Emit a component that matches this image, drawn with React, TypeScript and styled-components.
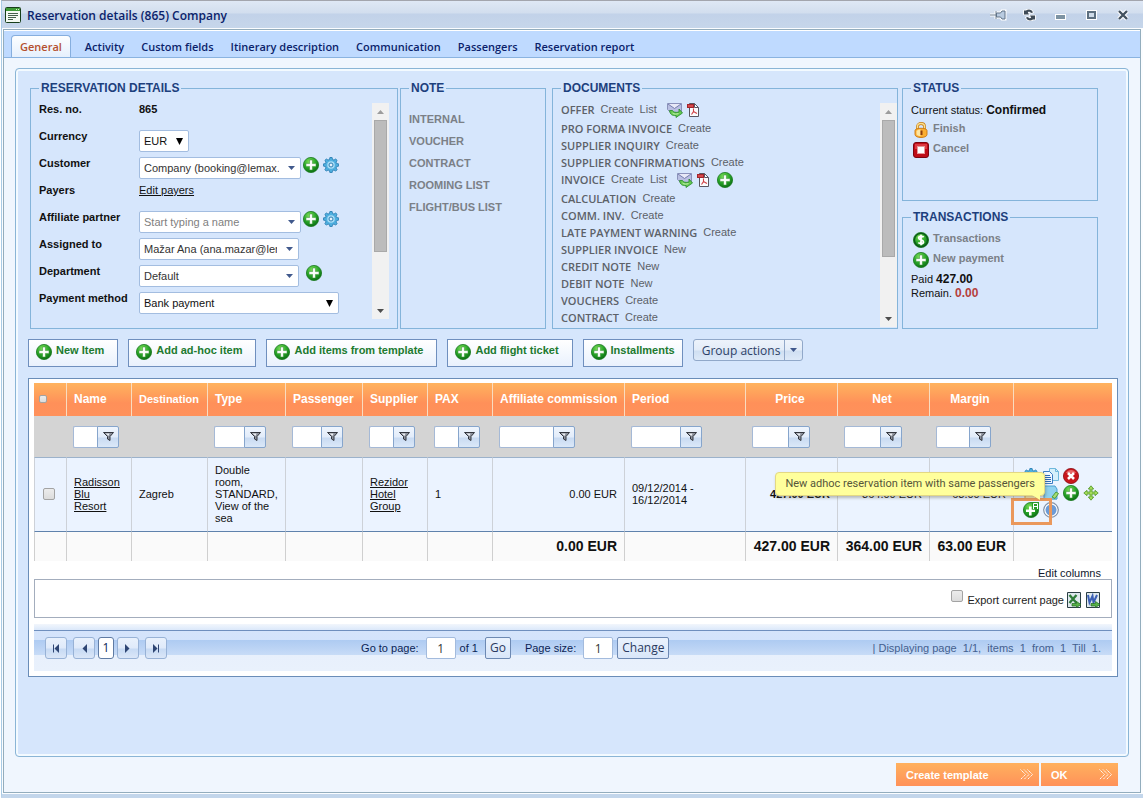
import React from "react";
import styled, { createGlobalStyle, css } from "styled-components";

const GlobalStyle = createGlobalStyle`
  *, *::before, *::after { box-sizing: border-box; }
  body {
    margin: 0;
    background: #fff;
    color: #111;
    font-family: "Liberation Sans", Arial, sans-serif;
    font-size: 11px;
    line-height: 14px;
  }
  button, input, select { font: inherit; color: inherit; margin: 0; }
  button { cursor: pointer; }
`;

const humanist = css`font-family: "Open Sans", "Noto Sans", sans-serif;`;

/* ---------- window frame ---------- */

const Frame = styled.div`
  display: flex;
  flex-direction: column;
  min-height: calc(100vh - 1px);
  margin-left: 1px;
  border-top: 1px solid #a3a5ad;
  border-left: 1px solid #a9cbe6;
  border-bottom: 4px solid #c3d6eb;
  background: #fbfdff;
`;

const TitleBar = styled.header`
  display: flex;
  align-items: center;
  gap: 6px;
  height: 27px;
  padding: 0 5px 0 3px;
  background: linear-gradient(#dfe8f5, #d2deee 12px, #c2d2e9 13px, #c6d6ea);
`;

const Title = styled.h1`
  ${humanist}
  flex: 1;
  margin: 0;
  padding-top: 2px;
  font-size: 12px;
  font-weight: 600;
  line-height: 16px;
  color: #0b1f6b;
`;

const WindowControls = styled.div`
  display: flex;
`;

const WindowButton = styled.button`
  display: flex;
  align-items: center;
  justify-content: center;
  width: 31px;
  height: 20px;
  padding: 0;
  border: 0;
  background: none;
`;

const WindowBody = styled.main`
  display: flex;
  flex: 1;
  flex-direction: column;
  margin: 1px 2px 1px 1px;
  border: 1px solid #93adbd;
  background: #f0f6fe;
`;

const TabStrip = styled.nav`
  display: flex;
  align-items: flex-end;
  gap: 1px;
  height: 28px;
  padding-left: 7px;
  border-top: 1px solid #fff;
  border-bottom: 1px solid #8ab3e0;
  background: #bfdaff;
`;

const Tab = styled.button<{ $active?: boolean }>`
  ${humanist}
  height: 22px;
  padding: 2px 8px 0;
  border: 0;
  background: none;
  font-size: 11px;
  font-weight: 600;
  color: #0b1f6b;
  ${(p) =>
    p.$active &&
    css`
      margin-right: 5px;
      padding-top: 1px;
      border: 1px solid #86aede;
      border-bottom: 0;
      border-radius: 4px 4px 0 0;
      background: linear-gradient(#fdfeff, #e6f0fd);
      color: #b5502f;
    `}
`;

const Panel = styled.section`
  flex: 1;
  margin: 10px 11px 0;
  padding: 12px 10px 12px 12px;
  border: 1px solid #8ab5d6;
  border-radius: 4px;
  background: #d6e6fc;
  box-shadow: inset 0 0 0 2px #f3faff;
`;

const Footer = styled.footer`
  display: flex;
  justify-content: flex-end;
  gap: 2px;
  padding: 6px 22px 6px;
`;

const FooterButton = styled.button<{ $wide?: boolean }>`
  display: flex;
  align-items: center;
  justify-content: space-between;
  width: ${(p) => (p.$wide ? 143 : 77)}px;
  height: 23px;
  padding: 0 6px 0 10px;
  border: 0;
  background: linear-gradient(#ffb15e, #ff9159);
  color: #fff;
  font-weight: bold;
`;

/* ---------- summary boxes ---------- */

const Summary = styled.div`
  display: grid;
  grid-template-columns: 370fr 152fr 350fr 196fr;
  margin: 0 20px 0 2px;
`;

const Box = styled.fieldset<{ $after?: number }>`
  min-width: 0;
  margin: 0 ${(p) => p.$after ?? 0}px 0 0;
  padding: 8px 8px 0;
  border: 1px solid #84b4da;
`;

const Legend = styled.legend`
  padding: 0 2px;
  font-size: 12px;
  font-weight: bold;
  line-height: 14px;
  color: #1d3f7d;
`;

const SideColumn = styled.div`
  display: grid;
  grid-template-rows: 120px 119px;
  gap: 9px;
`;

const ScrollPane = styled.div`
  display: flex;
  justify-content: space-between;
`;

const DetailsPane = styled(ScrollPane)`
  height: 216px;
`;

const DocumentsPane = styled(ScrollPane)`
  height: 224px;
  margin-right: -8px;
`;

const Track = styled.div`
  display: flex;
  flex-direction: column;
  align-items: center;
  width: 17px;
  background: #f1f1f1;
`;

const TrackArrow = styled.div`
  display: flex;
  align-items: center;
  justify-content: center;
  height: 17px;
`;

const Thumb = styled.div<{ $size: number }>`
  width: 13px;
  height: ${(p) => p.$size}px;
  margin-bottom: auto;
  border: 1px solid #a9a9a9;
  background: #bcbcbc;
`;

const Form = styled.div`
  display: grid;
  grid-auto-rows: 27px;
`;

const FormRow = styled.div`
  display: flex;
  align-items: flex-start;
`;

const labelStyle = css`
  width: 100px;
  font-weight: bold;
  line-height: 13px;
`;
const FieldLabel = styled.label`${labelStyle}`;
const FieldName = styled.span`${labelStyle}`;

const FieldValue = styled.b`
  line-height: 13px;
`;

const TextLink = styled.a`
  color: inherit;
  line-height: 12px;
`;

const Field = styled.span<{ $width: number }>`
  position: relative;
  display: flex;
  align-items: center;
  width: ${(p) => p.$width}px;
  height: 22px;
  border: 1px solid #a3bde0;
  border-radius: 2px;
  background: #fff;
`;

const Select = styled.select`
  width: 100%;
  height: 20px;
  padding: 0 18px 0 4px;
  border: 0;
  background: none;
  appearance: none;
  outline: 0;
`;

const SelectMark = styled.span`
  position: absolute;
  right: 5px;
  display: flex;
  pointer-events: none;
`;

const ComboInput = styled.input`
  flex: 1;
  min-width: 0;
  height: 18px;
  padding: 0;
  margin-left: 4px;
  border: 0;
  outline: 0;
  background: none;
  color: #333;
  &::placeholder { color: #808080; opacity: 1; }
`;

const ComboButton = styled.button`
  display: flex;
  align-items: center;
  justify-content: center;
  width: 17px;
  height: 20px;
  margin-left: 4px;
  padding: 0;
  border: 0;
  background: none;
`;

const FieldIcons = styled.span<{ $before?: number }>`
  display: flex;
  gap: 4px;
  margin-left: ${(p) => p.$before ?? 2}px;
`;

const IconButton = styled.button`
  display: block;
  width: 16px;
  height: 16px;
  padding: 0;
  border: 0;
  background: none;
  svg { display: block; }
`;

const NoteList = styled.ul`
  margin: 5px 0 0;
  padding: 0;
  list-style: none;
  font-weight: bold;
  line-height: 22px;
`;

const QuietLink = styled.a`
  color: #7b8087;
  text-decoration: none;
`;

const DocumentList = styled.ul`
  margin: -2px 0 0;
  padding: 0;
  list-style: none;
`;

const DocumentRow = styled.li<{ $tall?: boolean }>`
  display: flex;
  gap: 6px;
  height: ${(p) => (p.$tall ? 19 : 17)}px;
  line-height: 17px;
  color: #5c6168;
`;

const DocumentName = styled.span`
  ${humanist}
  font-weight: 600;
`;

const DocumentLink = styled.a`
  color: #5c6168;
  text-decoration: none;
`;

const DocumentIcons = styled.span`
  display: flex;
  gap: 2px;
  margin: 1px 0 0 4px;
`;

const InvoiceAdd = styled.span`
  margin-top: 1px;
`;

const StatusLine = styled.p`
  margin: 0;
  line-height: 14px;
  b { font-size: 12px; }
`;

const Remaining = styled.b`
  color: #b5403c;
`;

const ActionList = styled.ul<{ $before?: number }>`
  display: grid;
  grid-auto-rows: 20px;
  margin: ${(p) => p.$before ?? 0}px 0 0 2px;
  padding: 0;
  list-style: none;
  font-weight: bold;
  line-height: 12px;
  li { display: flex; gap: 4px; }
`;

/* ---------- toolbar ---------- */

const Toolbar = styled.div`
  display: flex;
  align-items: flex-start;
  gap: 10px;
  margin: 10px 0 11px;
`;

const ToolButton = styled.button<{ $tight?: boolean }>`
  display: flex;
  gap: 4px;
  height: 28px;
  padding: 4px ${(p) => (p.$tight ? 7 : 13)}px 0 7px;
  border: 1px solid #6f8fbe;
  background: linear-gradient(#fff, #e9f1fd);
  color: #217a2f;
  font-weight: bold;
  line-height: 12px;
  white-space: nowrap;
`;

const SplitButton = styled.div`
  display: flex;
  height: 22px;
  border: 1px solid #91a8c9;
  border-radius: 3px;
  background: linear-gradient(#edf3fb, #e3ecf8 10px, #cfdff2 11px, #dde9f8);
`;

const SplitMain = styled.button`
  ${humanist}
  padding: 1px 4px 0 8px;
  border: 0;
  border-right: 1px solid #91a8c9;
  background: none;
  color: #2d3f66;
  font-size: 12px;
  line-height: 19px;
`;

const SplitToggle = styled.button`
  display: flex;
  align-items: center;
  justify-content: center;
  width: 17px;
  padding: 0;
  border: 0;
  background: none;
`;

/* ---------- items grid ---------- */

const GridBox = styled.section`
  padding: 4px 5px 5px;
  border: 1px solid #6a8db8;
  background: #fff;
`;

const Table = styled.table`
  width: 100%;
  table-layout: fixed;
  border-collapse: separate;
  border-spacing: 0;
  line-height: 12px;
`;

type Align = "left" | "right" | "center";

const HeadCell = styled.th<{ $align?: Align; $small?: boolean }>`
  height: 33px;
  padding: 0 ${(p) => (p.$align === "center" ? 10 : 0)}px 2px 7px;
  border-left: 1px solid #f9dcc0;
  background: linear-gradient(#ffb35e, #ff9059 20px, #ff915b);
  color: #fff;
  font-size: ${(p) => (p.$small ? 11 : 12)}px;
  text-align: ${(p) => p.$align ?? "left"};
  white-space: nowrap;
  &:first-child { border-left: 0; padding-left: 5px; }
`;

const FilterCell = styled.td`
  height: 41px;
  padding: 0 0 0 7px;
  background: #d4d4d4;
`;

const Filter = styled.span`
  display: flex;
`;

const FilterInput = styled.input<{ $width: number }>`
  width: ${(p) => p.$width}px;
  height: 22px;
  padding: 0 3px;
  border: 1px solid #a5b9d6;
  border-right: 0;
  border-radius: 2px 0 0 2px;
  background: #fff;
`;

const FilterButton = styled.button`
  display: flex;
  align-items: center;
  justify-content: center;
  width: 22px;
  height: 22px;
  padding: 0;
  border: 1px solid #86a5cc;
  border-radius: 0 2px 2px 0;
  background: linear-gradient(#eff5fd, #e2ecfa 10px, #c9dbf2 11px, #dbe8f8);
`;

const Cell = styled.td<{ $align?: Align; $bold?: boolean }>`
  height: 75px;
  padding: 0 7px 2px;
  border-top: 1px solid #9cb2cb;
  border-left: 1px solid #cdd1d8;
  border-bottom: 1px solid #5f82ac;
  background: #ebf3ff;
  text-align: ${(p) => p.$align ?? "left"};
  font-weight: ${(p) => (p.$bold ? "bold" : "normal")};
`;

const TotalCell = styled.td`
  height: 29px;
  padding: 0 7px 1px;
  border-left: 1px solid #cfcfcf;
  background: #fafafa;
  font-size: 14px;
  font-weight: bold;
  text-align: right;
  white-space: nowrap;
`;

const CheckBox = styled.input<{ $size?: number }>`
  display: block;
  width: ${(p) => p.$size ?? 12}px;
  height: ${(p) => p.$size ?? 12}px;
  appearance: none;
  border: 1px solid #a3a3a3;
  border-radius: 2px;
  background: linear-gradient(#ececec, #dcdcdc);
`;

const RowCheck = styled.div`
  padding-left: 1px;
`;

const RowActions = styled.div`
  position: relative;
  display: grid;
  grid-template-columns: repeat(4, 20px);
  grid-auto-rows: 17px;
  width: 80px;
  margin-left: 2px;
`;

const Tooltip = styled.div`
  position: absolute;
  right: 58px;
  top: 4px;
  z-index: 2;
  height: 24px;
  padding: 0 9px;
  border: 1px solid #e3d884;
  border-radius: 4px;
  background: #ffff9c;
  box-shadow: 1px 2px 3px rgba(80, 80, 60, 0.35);
  color: #55553a;
  font-family: Roboto, "Liberation Sans", sans-serif;
  line-height: 22px;
  white-space: nowrap;
  &::after {
    content: "";
    position: absolute;
    right: 4px;
    top: 22px;
    border-top: 5px solid #ffff9c;
    border-left: 8px solid transparent;
  }
`;

const Highlight = styled.span`
  position: absolute;
  left: -12px;
  top: 30px;
  width: 41px;
  height: 27px;
  border: 3px solid #ea985c;
  pointer-events: none;
`;

const EditColumns = styled.div`
  padding: 6px 11px 0 0;
  line-height: 12px;
  text-align: right;
  a { color: #10182e; text-decoration: none; }
`;

const ExportBar = styled.div`
  display: flex;
  align-items: center;
  justify-content: flex-end;
  gap: 2px;
  height: 39px;
  padding: 3px 10px 0 0;
  border: 1px solid #a3adbd;
`;

const ExportIcons = styled.span`
  display: flex;
  gap: 3px;
`;

const ExportLabel = styled.label`
  display: flex;
  gap: 4px;
  color: #222;
  input { margin-top: -3px; }
`;

const Pager = styled.div`
  display: flex;
  align-items: center;
  height: 47px;
  margin-top: 6px;
  padding: 1px 11px 0;
  background: linear-gradient(
    #f2f6fc, #dbe8fa 6px, #6f8fbe 6px, #6f8fbe 7px, #d5e4fb 7px, #d3e3fb 16px,
    #aecbf2 16px, #b9d2f4 23px, #c8dcf7 31px, #e8f0fc 31px, #e9f1fc
  );
  color: #0c1f55;
`;

const PagerButtons = styled.div`
  display: flex;
  gap: 6px;
`;

const PageSteps = styled.div`
  display: flex;
  gap: 3px;
`;

const PagerButton = styled.button<{ $current?: boolean }>`
  display: flex;
  align-items: center;
  justify-content: center;
  width: ${(p) => (p.$current ? 16 : 22)}px;
  height: 22px;
  padding: 0;
  border: 1px solid ${(p) => (p.$current ? "#5f7ba4" : "#98b2d6")};
  border-radius: 3px;
  background: ${(p) => (p.$current ? "#fff" : "linear-gradient(#e9f1fc, #dfeafa 10px, #c7daf4 11px, #dbe7f8)")};
  ${humanist}
  font-size: 12px;
`;

const PagerForm = styled.div`
  display: flex;
  align-items: center;
  margin-left: calc(18% + 4px);
`;

const PagerInput = styled.input`
  ${humanist}
  width: 30px;
  height: 22px;
  margin: 0 4px 0 7px;
  padding: 0;
  border: 1px solid #a3bbdd;
  border-radius: 2px;
  background: #fff;
  color: #333;
  font-size: 12px;
  text-align: center;
`;

const PagerAction = styled.button<{ $before?: number; $after?: number }>`
  ${humanist}
  height: 22px;
  margin: 0 ${(p) => p.$after ?? 0}px 0 ${(p) => p.$before ?? 0}px;
  padding: 0 4px;
  border: 1px solid #6d89b3;
  border-radius: 2px;
  background: linear-gradient(#eaf2fd, #d9e6f9);
  color: #2b3a60;
  font-size: 12px;
  line-height: 20px;
`;

const PagerInfo = styled.span`
  margin-left: auto;
  color: #44608f;
  white-space: pre;
`;

/* ---------- icons ---------- */

const Icon = ({ size = 16, children }: { size?: number; children: React.ReactNode }) => (
  <svg width={size} height={size} viewBox="0 0 16 16" aria-hidden="true">
    {children}
  </svg>
);

const GreenBall = ({ id }: { id: string }) => (
  <>
    <defs>
      <radialGradient id={id} cx="40%" cy="28%" r="75%">
        <stop offset="0" stopColor="#7fe05a" />
        <stop offset="0.55" stopColor="#28a528" />
        <stop offset="1" stopColor="#0a6a12" />
      </radialGradient>
    </defs>
    <circle cx="8" cy="8" r="7.6" fill={`url(#${id})`} stroke="#1b7a20" strokeWidth="0.8" />
  </>
);

const PlusIcon = () => (
  <Icon>
    <GreenBall id="ball" />
    <path d="M6.6 3h2.8v3.6H13v2.8H9.400V13H6.600V9.400H3V6.600h3.600z" fill="#fff" stroke="#2c8a2a" strokeWidth="0.5" />
  </Icon>
);

const PlusAIcon = () => (
  <Icon>
    <GreenBall id="ballA" />
    <path d="M6 4.500h2.600v3H12v2.600H8.600v3.400H6v-3.400H3V7.500h3z" fill="#fff" />
    <path d="M9 0h7v7.500H9z" fill="#2a9a2a" />
    <path d="M10.500 7V1.500h4V7M10.500 4.500h4" stroke="#fff" fill="none" />
  </Icon>
);

const DollarIcon = () => (
  <Icon>
    <GreenBall id="ballD" />
    <circle cx="8" cy="8" r="6.6" fill="none" stroke="#0a5a18" strokeWidth="1.4" />
    <path d="M10.700 5.200C9.500 4 5.700 3.900 5.700 6c0 2.200 4.800 1.500 4.800 3.900 0 2.200-3.900 2.200-5.200.6M8 2.800v10.400" fill="none" stroke="#fff" strokeWidth="1.8" />
  </Icon>
);

const GearIcon = () => (
  <Icon>
    <path
      d="M6.900.5h2.200l.4 2 1.500.6 1.700-1.100 1.400 1.400-1.100 1.700.7 1.500 2 .3v2.200l-2 .4-.7 1.500 1.100 1.700-1.400 1.400-1.700-1.100-1.500.6-.4 2H6.900l-.4-2-1.500-.6-1.700 1.100-1.400-1.400L3 11l-.6-1.500-2-.4V6.900l2-.3L3 5.100 1.900 3.400 3.300 2 5 3.100l1.500-.6z"
      fill="#4fb0e0" stroke="#2b7fb3" strokeWidth="0.9"
    />
    <circle cx="8" cy="8" r="3.8" fill="#a9dcf5" />
    <circle cx="8" cy="8" r="2" fill="#e3f1fc" stroke="#2b7fb3" />
  </Icon>
);

const AppIcon = () => (
  <Icon>
    <rect x="0.5" y="0.5" width="15" height="15" rx="1" fill="#f4faf2" stroke="#173f1a" />
    <rect x="1" y="1" width="14" height="3" fill="#3e9b37" />
    <path d="M11 2.500h1M13 2.500h1" stroke="#d5f0c8" />
    <path d="M3 6.500h10M3 8.500h10M3 10.500h8M3 12.500h5" stroke="#44604a" />
  </Icon>
);

const MailIcon = () => (
  <Icon>
    <path d="M.5 1.500h14v9H3.500l-3-3z" fill="#b9bfe2" stroke="#8b92bb" />
    <path d="M1 2l6.500 4.500L14 2" fill="#e7e9f7" stroke="#767db0" />
    <path d="M2.500 8.500c.5 4 3 5.500 6.500 5v2l6.500-4.500L12 7v3c-3 .8-6 .3-6.500-1.500z" fill="#67c950" stroke="#238a28" strokeWidth="0.8" />
    <path d="M5.500 11c1.500 1.500 4 1.200 6 .6" fill="none" stroke="#c5f2b0" />
  </Icon>
);

const PdfIcon = () => (
  <Icon>
    <path d="M4.500 1.500h5l4 4v9h-9z" fill="#fbfbfd" stroke="#5a5560" />
    <path d="M9.500 1.500v4h4" fill="none" stroke="#5a5560" />
    <rect x="2.500" y="2.500" width="6" height="3" fill="#d8484c" stroke="#a3262c" />
    <path d="M8.500 6.500v3L6.500 12.500M8.500 9.500l3.500 2" fill="none" stroke="#cf4045" strokeWidth="1.100" />
  </Icon>
);

const LockIcon = () => (
  <Icon>
    <path d="M4.500 8V4.500c0-4 7-4 7 0V8" fill="none" stroke="#c47c18" strokeWidth="2.800" />
    <path d="M4.500 8V4.500c0-4 7-4 7 0V8" fill="none" stroke="#fde08c" strokeWidth="1.400" />
    <path d="M2 8.500C2 5.500 14 5.500 14 8.500v4c0 4-12 4-12 0z" fill="#fbae32" stroke="#c9760f" strokeWidth="0.9" />
    <path d="M3.500 9c1-1.200 3-1.500 4-1.500v6.500c-2 0-4-.5-4-2z" fill="#fee5a0" />
    <path d="M7.500 8.500h2V13h-2z" fill="#8e3e0c" />
  </Icon>
);

const StopIcon = () => (
  <Icon>
    <rect x="0.500" y="0.500" width="15" height="15" rx="2.500" fill="#bf0d18" stroke="#7c0510" />
    <path d="M2 2h12v5H2z" fill="#dc3a42" />
    <rect x="4.500" y="4.500" width="7" height="7" fill="#fff" stroke="#e9989a" />
  </Icon>
);

const DeleteIcon = () => (
  <Icon>
    <circle cx="8" cy="8" r="7.600" fill="#c8161d" stroke="#8c0d12" strokeWidth="0.800" />
    <path d="M3 5c2-4 8-4 10 0z" fill="#e76a6a" />
    <path d="M5 5l6 6M11 5l-6 6" stroke="#fff" strokeWidth="2.600" />
  </Icon>
);

const CopyIcon = () => (
  <Icon>
    <path d="M6.500.5h6l3 3v9h-9z" fill="#d6f0fb" stroke="#6fb8dc" />
    <path d="M12.500.5v3h3" fill="none" stroke="#6fb8dc" />
    <path d="M.5 3.500h6l3 3v9h-9z" fill="#f1f8ff" stroke="#3c7cc4" />
    <path d="M2 7.500h5M2 9.500h6M2 11.500h6M2 13.500h6" stroke="#2d6bb8" />
  </Icon>
);

const NoteIcon = () => (
  <Icon>
    <path d="M1 1h11l2 3v10H1z" fill="#8fd1f0" stroke="#4a9fd0" />
    <path d="M9 12l4-5 2.500 1.500L12 13.500z" fill="#a6dd72" stroke="#4d9c3a" />
    <path d="M1 14.500h13" stroke="#7fb8d8" />
  </Icon>
);

const FlagIcon = () => (
  <Icon>
    <path d="M2 2h11v12H2z" fill="#fbe8b0" stroke="#d9a848" />
  </Icon>
);

const MoveIcon = () => (
  <Icon>
    <path d="M8 .8L10.700 4H9v3h3V5.300L15.200 8 12 10.700V9H9v3h1.700L8 15.200 5.300 12H7V9H4v1.700L.8 8 4 5.300V7h3V4H5.300z" fill="#a5dc5c" stroke="#4f9626" strokeWidth="0.800" />
  </Icon>
);

const InfoIcon = () => (
  <Icon>
    <circle cx="8" cy="8" r="7.300" fill="#fff" stroke="#8291a8" strokeWidth="1.200" />
    <circle cx="8" cy="8" r="5.500" fill="#6d9bd6" />
    <path d="M7 4.500h2v7H7z" fill="#466fae" />
  </Icon>
);

const FunnelIcon = () => (
  <svg width="11" height="11" viewBox="0 0 11 11" aria-hidden="true">
    <path d="M.5 1.500h10L7 5.500v4L4.500 8V5.500z" fill="#8b909b" stroke="#33363e" />
    <path d="M2.500 2.500h4L5.500 5z" fill="#eef0f4" />
  </svg>
);

const SheetIcon = ({ color, letter }: { color: string; letter: "x" | "w" }) => (
  <Icon>
    <path d="M1.500.5h13v15h-13z" fill="#dfe9ee" stroke="#2b3f46" />
    {letter === "x" ? (
      <path d="M3.500 3l7 8M10.500 3l-7 8" stroke={color} strokeWidth="2.400" />
    ) : (
      <path d="M3 3l1.500 7.500L7.500 4l1 6.500 3.500-7.500" fill="none" stroke={color} strokeWidth="2" />
    )}
    <path d="M6 11.500h4.500v-2L15 12.500l-4.500 3v-1.500H6z" fill="#58b148" stroke="#1f6b20" strokeWidth="0.700" />
  </Icon>
);

const Triangle = ({ color, up, wide = 7 }: { color: string; up?: boolean; wide?: number }) => (
  <svg width={wide} height="4" viewBox="0 0 8 4" preserveAspectRatio="none" aria-hidden="true">
    <path d={up ? "M0 4h8L4 0z" : "M0 0h8L4 4z"} fill={color} />
  </svg>
);

const SelectArrow = () => (
  <svg width="7" height="7" viewBox="0 0 7 7" aria-hidden="true">
    <path d="M0 0h7L3.500 7z" fill="#000" />
  </svg>
);

const PagerGlyph = ({ back, end }: { back?: boolean; end?: boolean }) => (
  <svg width="8" height="9" viewBox="0 0 8 9" aria-hidden="true">
    <g transform={back ? "translate(8 0) scale(-1 1)" : undefined}>
      <path d="M1 0v9l4.500-4.500z" fill="#2f4674" />
      {end && <path d="M6.500 0.500v8" stroke="#2f4674" />}
    </g>
  </svg>
);

const Chevrons = () => (
  <svg width="13" height="11" viewBox="0 0 13 11" aria-hidden="true">
    <path d="M.5 0.500l5 5-5 5M4 0.500l5 5-5 5M7.500 0.500l5 5-5 5" fill="none" stroke="#fff" strokeDasharray="1.400 0.600" />
  </svg>
);

const halo = { stroke: "#fff", strokeWidth: 3 } as const;

const PinGlyph = () => (
  <svg width="17" height="12" viewBox="0 0 17 12" aria-hidden="true">
    <path d="M0 6h6M6 2v8M6.500 4h4l1.500-2h3v8h-3L10.500 8h-4z" fill="none" {...halo} />
    <path d="M0 6h6M6 2v8" stroke="#6e8093" />
    <path d="M6.500 4h4l1.500-2h3v8h-3L10.500 8h-4z" fill="#b9cbe0" stroke="#607388" />
  </svg>
);

const RefreshGlyph = () => (
  <svg width="13" height="12" viewBox="0 0 13 12" aria-hidden="true">
    <g stroke="#fff" strokeWidth="1.600" strokeLinejoin="round" fill="#3f4b57" paintOrder="stroke">
      <path d="M1 1.500h2C6-.5 9 .8 10 3.500L8 4C7 2.500 6 2.500 4.800 3.200L6 5.500H1z" />
      <path d="M12 10.500h-2C7 12.500 4 11.200 3 8.500L5 8c1 1.500 2 1.500 3.200.8L7 6.500h5z" />
    </g>
  </svg>
);

const MinimizeGlyph = () => (
  <svg width="11" height="12" viewBox="0 0 11 12" aria-hidden="true">
    <rect x="0.500" y="5.500" width="10" height="5" fill="#7d93a3" stroke="#fff" />
  </svg>
);

const RestoreGlyph = () => (
  <svg width="11" height="10" viewBox="0 0 11 10" aria-hidden="true">
    <rect x="0.500" y="0.500" width="10" height="9" fill="#fff" stroke="#fff" />
    <rect x="2" y="2" width="7" height="6" fill="#cfdbe8" stroke="#5d6f7f" strokeWidth="2" />
  </svg>
);

const CloseGlyph = () => (
  <svg width="12" height="12" viewBox="0 0 12 12" aria-hidden="true">
    <path d="M2 2l8 8M10 2l-8 8" stroke="#fff" strokeWidth="4.500" />
    <path d="M2 2l8 8M10 2l-8 8" stroke="#44525f" strokeWidth="2.400" />
  </svg>
);

/* ---------- composed parts ---------- */

const Scrollbar = ({ thumb }: { thumb: number }) => (
  <Track aria-hidden="true">
    <TrackArrow><Triangle color="#9c9c9c" up /></TrackArrow>
    <Thumb $size={thumb} />
    <TrackArrow><Triangle color="#4d4d4d" /></TrackArrow>
  </Track>
);

type ComboProps = { id: string; width: number; value?: string; placeholder?: string };

const Combo = ({ id, width, value, placeholder }: ComboProps) => (
  <Field $width={width}>
    <ComboInput id={id} defaultValue={value} placeholder={placeholder} />
    <ComboButton aria-label="Open list"><Triangle color="#41598c" /></ComboButton>
  </Field>
);

const AddButton = ({ label }: { label: string }) => (
  <IconButton aria-label={label}><PlusIcon /></IconButton>
);

const SettingsButton = ({ label }: { label: string }) => (
  <IconButton aria-label={label}><GearIcon /></IconButton>
);

const TABS = ["General", "Activity", "Custom fields", "Itinerary description", "Communication", "Passengers", "Reservation report"];

const NOTES = ["INTERNAL", "VOUCHER", "CONTRACT", "ROOMING LIST", "FLIGHT/BUS LIST"];

const DOCUMENTS: { name: string; links: string[]; files?: boolean; add?: boolean }[] = [
  { name: "OFFER", links: ["Create", "List"], files: true },
  { name: "PRO FORMA INVOICE", links: ["Create"] },
  { name: "SUPPLIER INQUIRY", links: ["Create"] },
  { name: "SUPPLIER CONFIRMATIONS", links: ["Create"] },
  { name: "INVOICE", links: ["Create", "List"], files: true, add: true },
  { name: "CALCULATION", links: ["Create"] },
  { name: "COMM. INV.", links: ["Create"] },
  { name: "LATE PAYMENT WARNING", links: ["Create"] },
  { name: "SUPPLIER INVOICE", links: ["New"] },
  { name: "CREDIT NOTE", links: ["New"] },
  { name: "DEBIT NOTE", links: ["New"] },
  { name: "VOUCHERS", links: ["Create"] },
  { name: "CONTRACT", links: ["Create"] },
];

type Column = { width: number; title?: string; align?: Align; small?: boolean; filter?: number; total?: string };

const COLUMNS: Column[] = [
  { width: 32 },
  { width: 65, title: "Name", filter: 24 },
  { width: 76, title: "Destination", small: true },
  { width: 78, title: "Type", filter: 30 },
  { width: 77, title: "Passenger", filter: 29 },
  { width: 65, title: "Supplier", filter: 24 },
  { width: 65, title: "PAX", filter: 24 },
  { width: 132, title: "Affiliate commission", filter: 54, total: "0.00 EUR" },
  { width: 121, title: "Period", filter: 49 },
  { width: 92, title: "Price", align: "center", filter: 36, total: "427.00 EUR" },
  { width: 92, title: "Net", align: "center", filter: 36, total: "364.00 EUR" },
  { width: 84, title: "Margin", align: "center", filter: 33, total: "63.00 EUR" },
  { width: 99 },
];

const TOOLS = ["New Item", "Add ad-hoc item", "Add items from template", "Add flight ticket", "Installments"];

const Col = styled.col<{ $width: number }>`
  width: ${(p) => p.$width}px;
`;

const ReservationDetails = () => (
  <Box $after={2}>
    <Legend>RESERVATION DETAILS</Legend>
    <DetailsPane>
      <Form>
        <FormRow>
          <FieldName>Res. no.</FieldName>
          <FieldValue>865</FieldValue>
        </FormRow>
        <FormRow>
          <FieldLabel htmlFor="currency">Currency</FieldLabel>
          <Field $width={50}>
            <Select id="currency"><option>EUR</option></Select>
            <SelectMark><SelectArrow /></SelectMark>
          </Field>
        </FormRow>
        <FormRow>
          <FieldLabel htmlFor="customer">Customer</FieldLabel>
          <Combo id="customer" width={162} value="Company (booking@lemax." />
          <FieldIcons>
            <AddButton label="Add customer" />
            <SettingsButton label="Customer settings" />
          </FieldIcons>
        </FormRow>
        <FormRow>
          <FieldName>Payers</FieldName>
          <TextLink href="#payers">Edit payers</TextLink>
        </FormRow>
        <FormRow>
          <FieldLabel htmlFor="affiliate">Affiliate partner</FieldLabel>
          <Combo id="affiliate" width={162} placeholder="Start typing a name" />
          <FieldIcons>
            <AddButton label="Add affiliate" />
            <SettingsButton label="Affiliate settings" />
          </FieldIcons>
        </FormRow>
        <FormRow>
          <FieldLabel htmlFor="assigned">Assigned to</FieldLabel>
          <Combo id="assigned" width={160} value="Mažar Ana (ana.mazar@lem" />
        </FormRow>
        <FormRow>
          <FieldLabel htmlFor="department">Department</FieldLabel>
          <Combo id="department" width={160} value="Default" />
          <FieldIcons $before={7}><AddButton label="Add department" /></FieldIcons>
        </FormRow>
        <FormRow>
          <FieldLabel htmlFor="payment">Payment method</FieldLabel>
          <Field $width={200}>
            <Select id="payment"><option>Bank payment</option></Select>
            <SelectMark><SelectArrow /></SelectMark>
          </Field>
        </FormRow>
      </Form>
      <Scrollbar thumb={132} />
    </DetailsPane>
  </Box>
);

const Documents = () => (
  <Box $after={4}>
    <Legend>DOCUMENTS</Legend>
    <DocumentsPane>
      <DocumentList>
        {DOCUMENTS.map((doc) => (
          <DocumentRow key={doc.name} $tall={doc.files}>
            <DocumentName>{doc.name}</DocumentName>
            {doc.links.map((link) => (
              <DocumentLink key={link} href="#document">{link}</DocumentLink>
            ))}
            {doc.files && (
              <DocumentIcons>
                <IconButton aria-label="Send by mail"><MailIcon /></IconButton>
                <IconButton aria-label="Open PDF"><PdfIcon /></IconButton>
              </DocumentIcons>
            )}
            {doc.add && <InvoiceAdd><AddButton label="Add invoice" /></InvoiceAdd>}
          </DocumentRow>
        ))}
      </DocumentList>
      <Scrollbar thumb={137} />
    </DocumentsPane>
  </Box>
);

const ItemsTable = () => (
  <Table>
    <colgroup>{COLUMNS.map((c, i) => <Col key={i} $width={c.width} />)}</colgroup>
    <thead>
      <tr>
        {COLUMNS.map((c, i) => (
          <HeadCell key={i} $align={c.align} $small={c.small}>
            {i === 0 ? <CheckBox type="checkbox" $size={8} aria-label="Select all" /> : c.title}
          </HeadCell>
        ))}
      </tr>
    </thead>
    <tbody>
      <tr>
        {COLUMNS.map((c, i) => (
          <FilterCell key={i}>
            {c.filter && (
              <Filter>
                <FilterInput $width={c.filter} aria-label={`Filter ${c.title}`} />
                <FilterButton aria-label={`Apply ${c.title} filter`}><FunnelIcon /></FilterButton>
              </Filter>
            )}
          </FilterCell>
        ))}
      </tr>
      <tr>
        <Cell><RowCheck><CheckBox type="checkbox" aria-label="Select row" /></RowCheck></Cell>
        <Cell><TextLink href="#item">Radisson Blu Resort</TextLink></Cell>
        <Cell>Zagreb</Cell>
        <Cell>Double room, STANDARD, View of the sea</Cell>
        <Cell />
        <Cell><TextLink href="#supplier">Rezidor Hotel Group</TextLink></Cell>
        <Cell>1</Cell>
        <Cell $align="right">0.00 EUR</Cell>
        <Cell>09/12/2014 -<br />16/12/2014</Cell>
        <Cell $align="right" $bold>427.00 EUR</Cell>
        <Cell $align="right">364.00 EUR</Cell>
        <Cell $align="right">63.00 EUR</Cell>
        <Cell>
          <RowActions>
            <IconButton aria-label="Settings"><GearIcon /></IconButton>
            <IconButton aria-label="Copy"><CopyIcon /></IconButton>
            <IconButton aria-label="Delete"><DeleteIcon /></IconButton>
            <span />
            <IconButton aria-label="Flag"><FlagIcon /></IconButton>
            <IconButton aria-label="Edit note"><NoteIcon /></IconButton>
            <IconButton aria-label="Add"><PlusIcon /></IconButton>
            <IconButton aria-label="Move"><MoveIcon /></IconButton>
            <IconButton aria-label="New adhoc item"><PlusAIcon /></IconButton>
            <IconButton aria-label="Info"><InfoIcon /></IconButton>
            <Highlight />
            <Tooltip role="tooltip">New adhoc reservation item with same passengers</Tooltip>
          </RowActions>
        </Cell>
      </tr>
    </tbody>
    <tfoot>
      <tr>{COLUMNS.map((c, i) => <TotalCell key={i}>{c.total}</TotalCell>)}</tr>
    </tfoot>
  </Table>
);

export default function App() {
  return (
    <>
      <GlobalStyle />
      <Frame>
        <TitleBar>
          <AppIcon />
          <Title>Reservation details (865) Company</Title>
          <WindowControls>
            <WindowButton aria-label="Pin"><PinGlyph /></WindowButton>
            <WindowButton aria-label="Refresh"><RefreshGlyph /></WindowButton>
            <WindowButton aria-label="Minimize"><MinimizeGlyph /></WindowButton>
            <WindowButton aria-label="Maximize"><RestoreGlyph /></WindowButton>
            <WindowButton aria-label="Close"><CloseGlyph /></WindowButton>
          </WindowControls>
        </TitleBar>
        <WindowBody>
          <TabStrip>
            {TABS.map((tab, i) => <Tab key={tab} $active={i === 0}>{tab}</Tab>)}
          </TabStrip>
          <Panel>
            <Summary>
              <ReservationDetails />
              <Box $after={6}>
                <Legend>NOTE</Legend>
                <NoteList>
                  {NOTES.map((note) => <li key={note}><QuietLink href="#note">{note}</QuietLink></li>)}
                </NoteList>
              </Box>
              <Documents />
              <SideColumn>
                <Box>
                  <Legend>STATUS</Legend>
                  <StatusLine>Current status: <b>Confirmed</b></StatusLine>
                  <ActionList $before={5}>
                    <li><LockIcon /><QuietLink href="#finish">Finish</QuietLink></li>
                    <li><StopIcon /><QuietLink href="#cancel">Cancel</QuietLink></li>
                  </ActionList>
                </Box>
                <Box>
                  <Legend>TRANSACTIONS</Legend>
                  <ActionList>
                    <li><DollarIcon /><QuietLink href="#transactions">Transactions</QuietLink></li>
                    <li><PlusIcon /><QuietLink href="#payment">New payment</QuietLink></li>
                  </ActionList>
                  <StatusLine>Paid <b>427.00</b></StatusLine>
                  <StatusLine>Remain. <Remaining>0.00</Remaining></StatusLine>
                </Box>
              </SideColumn>
            </Summary>
            <Toolbar>
              {TOOLS.map((tool) => (
                <ToolButton key={tool} $tight={tool === "Installments"}><PlusIcon />{tool}</ToolButton>
              ))}
              <SplitButton>
                <SplitMain>Group actions</SplitMain>
                <SplitToggle aria-label="More group actions"><Triangle color="#41598c" /></SplitToggle>
              </SplitButton>
            </Toolbar>
            <GridBox>
              <ItemsTable />
              <EditColumns><a href="#columns">Edit columns</a></EditColumns>
              <ExportBar>
                <ExportLabel><CheckBox type="checkbox" />Export current page</ExportLabel>
                <ExportIcons>
                  <IconButton aria-label="Export to Excel"><SheetIcon color="#2f7d3a" letter="x" /></IconButton>
                  <IconButton aria-label="Export to Word"><SheetIcon color="#3a5fb5" letter="w" /></IconButton>
                </ExportIcons>
              </ExportBar>
              <Pager>
                <PagerButtons>
                  <PagerButton aria-label="First page"><PagerGlyph back end /></PagerButton>
                  <PageSteps>
                    <PagerButton aria-label="Previous page"><PagerGlyph back /></PagerButton>
                    <PagerButton $current>1</PagerButton>
                    <PagerButton aria-label="Next page"><PagerGlyph /></PagerButton>
                  </PageSteps>
                  <PagerButton aria-label="Last page"><PagerGlyph end /></PagerButton>
                </PagerButtons>
                <PagerForm>
                  <label htmlFor="page">Go to page:</label>
                  <PagerInput id="page" defaultValue="1" />
                  of 1
                  <PagerAction $before={7} $after={14}>Go</PagerAction>
                  <label htmlFor="size">Page size:</label>
                  <PagerInput id="size" defaultValue="1" />
                  <PagerAction>Change</PagerAction>
                </PagerForm>
                <PagerInfo>{"| Displaying page  1/1,  items  1  from  1  Till  1."}</PagerInfo>
              </Pager>
            </GridBox>
          </Panel>
          <Footer>
            <FooterButton $wide>Create template<Chevrons /></FooterButton>
            <FooterButton>OK<Chevrons /></FooterButton>
          </Footer>
        </WindowBody>
      </Frame>
    </>
  );
}
